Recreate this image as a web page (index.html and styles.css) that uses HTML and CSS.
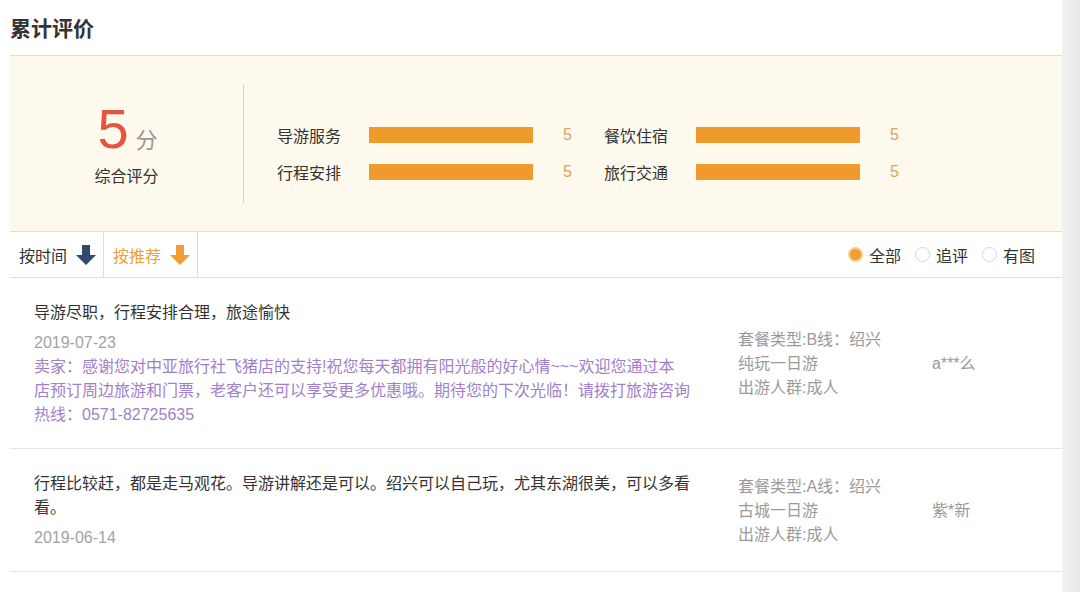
FILE: index.html
```html
<!DOCTYPE html>
<html lang="zh-CN">
<head>
<meta charset="utf-8">
<title>累计评价</title>
<link rel="stylesheet" href="styles.css">
</head>
<body>
<div class="frame">
  <main class="main">
    <h2 class="title">累计评价</h2>

    <section class="summary">
      <div class="overall">
        <div class="overall-num"><span class="big">5</span><span class="unit">分</span></div>
        <div class="overall-label">综合评分</div>
      </div>
      <div class="vdivider"></div>
      <div class="ratings">
        <div class="rating"><span class="r-label">导游服务</span><span class="r-bar"></span><span class="r-score">5</span></div>
        <div class="rating"><span class="r-label">餐饮住宿</span><span class="r-bar"></span><span class="r-score">5</span></div>
        <div class="rating"><span class="r-label">行程安排</span><span class="r-bar"></span><span class="r-score">5</span></div>
        <div class="rating"><span class="r-label">旅行交通</span><span class="r-bar"></span><span class="r-score">5</span></div>
      </div>
    </section>

    <nav class="toolbar">
      <div class="sort">
        <span class="sort-tab">按时间
          <svg class="arrow" viewBox="0 0 20 20" width="20" height="20"><path d="M6 0 H14 V10 H20 L10 20 L0 10 H6 Z" fill="#2f4a6d"/></svg>
        </span>
        <span class="sort-tab active">按推荐
          <svg class="arrow" viewBox="0 0 20 20" width="20" height="20"><path d="M6 0 H14 V10 H20 L10 20 L0 10 H6 Z" fill="#f0a032"/></svg>
        </span>
      </div>
      <div class="filters">
        <label class="radio"><span class="dot checked"></span>全部</label>
        <label class="radio"><span class="dot"></span>追评</label>
        <label class="radio"><span class="dot"></span>有图</label>
      </div>
    </nav>

    <article class="review">
      <div class="r-body">
        <p class="r-text">导游尽职，行程安排合理，旅途愉快</p>
        <p class="r-date">2019-07-23</p>
        <p class="r-reply">卖家：感谢您对中亚旅行社飞猪店的支持!祝您每天都拥有阳光般的好心情~~~欢迎您通过本店预订周边旅游和门票，老客户还可以享受更多优惠哦。期待您的下次光临！请拨打旅游咨询热线：0571-82725635</p>
      </div>
      <div class="r-meta">套餐类型:B线：绍兴纯玩一日游<br>出游人群:成人</div>
      <div class="r-user">a***么</div>
    </article>

    <article class="review">
      <div class="r-body">
        <p class="r-text">行程比较赶，都是走马观花。导游讲解还是可以。绍兴可以自己玩，尤其东湖很美，可以多看看。</p>
        <p class="r-date">2019-06-14</p>
      </div>
      <div class="r-meta">套餐类型:A线：绍兴古城一日游<br>出游人群:成人</div>
      <div class="r-user">紫*新</div>
    </article>
  </main>
  <div class="scrollbar"></div>
</div>
</body>
</html>
```

FILE: styles.css
```css
* { box-sizing: border-box; }
html, body { margin: 0; padding: 0; }
body {
  font-family: "Liberation Sans", "Noto Sans CJK SC", sans-serif;
  font-size: 16px;
  color: #333;
  background: #fff;
}
.frame { display: flex; width: 1080px; height: 592px; overflow: hidden; }
.main { width: 1062px; padding-left: 10px; flex: none; }
.scrollbar { flex: 1; background: linear-gradient(to right, #f1f1f1, #e9e9e9); }

.title {
  margin: 0;
  height: 56px;
  padding-top: 17px;
  font-size: 21px;
  line-height: 24px;
  font-weight: bold;
  color: #333;
  border-bottom: 1px solid #dcdcdc;
}

.summary {
  display: flex;
  align-items: center;
  height: 175px;
  background: #fdf9ec;
}
.overall { width: 233px; display: flex; flex-direction: column; align-items: center; }
.overall-num { line-height: 56px; height: 56px; white-space: nowrap; padding-left: 2px; }
.big { font-size: 56px; color: #e4553f; font-family: "Liberation Sans", sans-serif; }
.unit { font-size: 22px; color: #999; margin-left: 7px; }
.overall-label { margin-top: 10px; line-height: 20px; font-size: 16px; color: #333; }
.vdivider { width: 1px; height: 119px; background: #d6d2c6; }
.ratings {
  display: grid;
  grid-template-columns: 327px 327px;
  padding-left: 33px;
  padding-top: 20px;
}
.rating { display: flex; align-items: center; height: 37px; }
.r-label { width: 92px; color: #333; }
.r-bar { width: 164px; height: 16px; background: #ee9b2b; }
.r-score { padding-left: 30px; color: #e2a25a; }

.toolbar {
  display: flex;
  justify-content: space-between;
  align-items: stretch;
  height: 47px;
  border-top: 1px solid #dcdcdc;
  border-bottom: 1px solid #dcdcdc;
}
.sort { display: flex; }
.sort-tab {
  display: flex;
  align-items: center;
  gap: 9px;
  padding: 0 7px 0 9px;
  border-right: 1px solid #dcdcdc;
  color: #333;
}
.sort-tab.active { color: #f0a032; }
.arrow { display: block; margin-top: 1px; }
.filters { display: flex; align-items: center; padding-right: 27px; }
.radio { display: flex; align-items: center; color: #333; margin-left: 14px; }
.dot {
  width: 15px; height: 15px; border-radius: 50%;
  border: 1px solid #d4d4d4; background: #fff;
  margin-right: 6px;
}
.dot.checked { background: #f0a032; border: 2px solid #f7cd8e; }

.review {
  display: flex;
  align-items: center;
  padding: 23px 0 21px 24px;
  border-bottom: 1px solid #e6e6e6;
}
.r-body { width: 656px; flex: none; }
.r-body p { margin: 0; line-height: 24px; }
.r-text { color: #333; margin-bottom: 6px !important; }
.r-date { color: #a3a3a3; }
.r-reply { color: #a07fcc; }
.r-meta { width: 150px; margin-left: 48px; margin-right: 44px; color: #9a9a9a; line-height: 24px; flex: none; }
.r-user { color: #9a9a9a; line-height: 24px; }
```
